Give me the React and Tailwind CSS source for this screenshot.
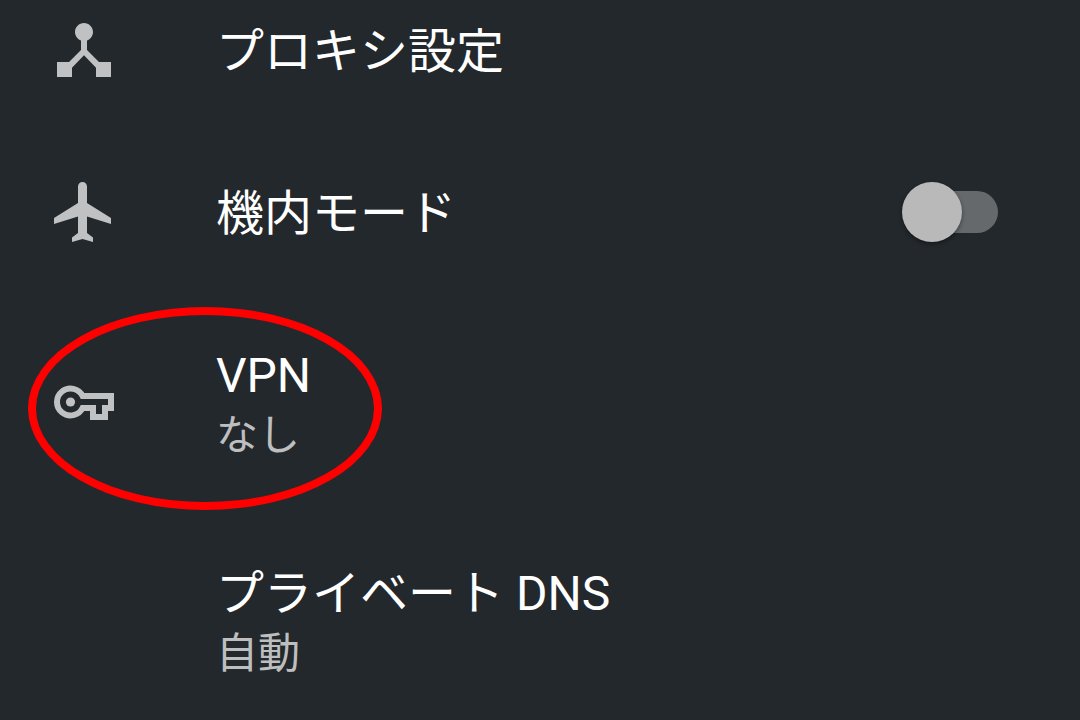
import React, { useState } from 'react';

const HubIcon = () => (
  <svg viewBox="0 0 24 24" className="w-full h-full" fill="currentColor" aria-hidden="true">
    <path d="M17 16l-4-4V8.82C14.16 8.4 15 7.3 15 6c0-1.66-1.34-3-3-3S9 4.34 9 6c0 1.3.84 2.4 2 2.82V12l-4 4H3v5h5v-3.05l4-4.2 4 4.2V21h5v-5h-4z" />
  </svg>
);

const PlaneIcon = () => (
  <svg viewBox="0 0 24 24" className="w-full h-full" fill="currentColor" aria-hidden="true">
    <path d="M21 16v-2l-8-5V3.5c0-.83-.67-1.5-1.5-1.5S10 2.67 10 3.5V9l-8 5v2l8-2.5V19l-2 1.5V22l3.5-1 3.5 1v-1.5L13 19v-5.5l8 2.5z" />
  </svg>
);

const KeyIcon = () => (
  <svg viewBox="0 0 72 72" className="w-full h-full" aria-hidden="true">
    <path
      d="M34.6 30H63v12h-6v9H45v-9H34.6A13.5 13.5 0 1 1 34.6 30Z"
      fill="none"
      stroke="currentColor"
      strokeWidth="6"
    />
    <circle cx="22.5" cy="36" r="4.6" fill="currentColor" />
  </svg>
);

const items = [
  { id: 'proxy', title: 'プロキシ設定', icon: HubIcon },
  { id: 'airplane', title: '機内モード', icon: PlaneIcon, toggle: true },
  { id: 'vpn', title: 'VPN', summary: 'なし', icon: KeyIcon, marked: true },
  { id: 'dns', title: 'プライベート DNS', summary: '自動' },
];

function RowContent({ item }) {
  const Icon = item.icon;
  return (
    <>
      <span className="w-18 h-18 shrink-0 text-[#c0c1c2]">{Icon && <Icon />}</span>
      <span className="flex-1 flex flex-col pt-1">
        <span className="text-5xl leading-[64px] text-white">{item.title}</span>
        {item.summary && (
          <span className="text-[42px] leading-[56px] text-[#bdbebf]">{item.summary}</span>
        )}
      </span>
    </>
  );
}

function SettingRow({ item }) {
  const [on, setOn] = useState(false);

  if (item.toggle) {
    return (
      <li>
        <label htmlFor={item.id} className="flex items-center gap-24 pl-12 pr-[82px] py-[45px] cursor-pointer">
          <RowContent item={item} />
          <input
            id={item.id}
            type="checkbox"
            role="switch"
            checked={on}
            onChange={(e) => setOn(e.target.checked)}
            className="relative appearance-none w-[90px] h-[42px] shrink-0 rounded-full bg-[#65696c] cursor-pointer before:absolute before:-left-[6px] before:-top-[9px] before:w-[60px] before:h-[60px] before:rounded-full before:bg-[#b9b9b9] before:shadow-[0_2px_4px_rgba(0,0,0,0.4)] checked:before:left-[36px]"
          />
        </label>
      </li>
    );
  }

  return (
    <li className="relative">
      <button
        type="button"
        className={`w-full flex items-center gap-24 px-12 text-left cursor-pointer ${item.summary ? 'py-[47px]' : 'py-[45px]'}`}
      >
        <RowContent item={item} />
      </button>
      {/* Highlight ring */}
      {item.marked && (
        <span className="absolute left-7 top-[14px] w-[354px] h-[203px] border-8 border-[#ff0000] rounded-[50%] pointer-events-none" />
      )}
    </li>
  );
}

function App() {
  return (
    <main className="h-screen overflow-hidden bg-[#23282c] font-[Roboto,'Noto_Sans_CJK_JP',sans-serif]">
      {/* List is scrolled slightly past its first row */}
      <ul className="-mt-[31px]">
        {items.map((item) => (
          <SettingRow key={item.id} item={item} />
        ))}
      </ul>
    </main>
  );
}

export default App;
